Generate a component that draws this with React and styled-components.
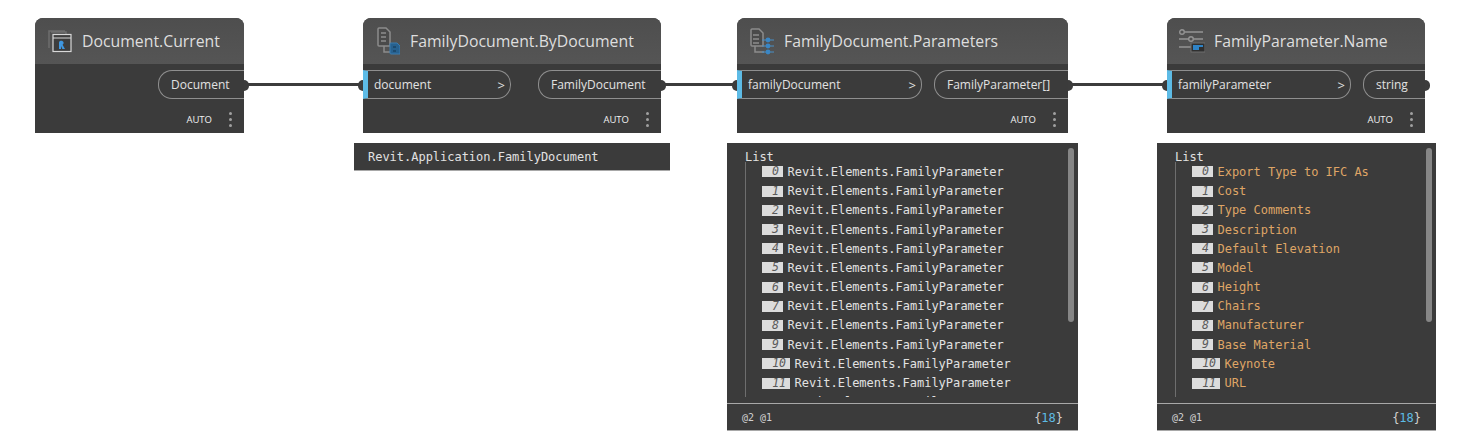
import styled, { createGlobalStyle } from "styled-components";

const GlobalStyle = createGlobalStyle`
  html, body {
    margin: 0;
    background: #fff;
  }
  #root {
    width: 1460px;
    height: 442px;
    overflow: hidden;
  }
`;

const Canvas = styled.div`
  position: relative;
  width: 1460px;
  height: 442px;
  background: #fff;
  font-family: "Open Sans", "Noto Sans", sans-serif;
`;

const Wire = styled.div`
  position: absolute;
  left: ${(p) => p.$x}px;
  top: 83px;
  width: ${(p) => p.$w}px;
  height: 3px;
  background: #3c3c3c;
`;

// nodes sit on a free canvas, so they keep their own coordinates
const Node = styled.div`
  position: absolute;
  left: ${(p) => p.$x}px;
  top: 18px;
  width: ${(p) => p.$w}px;
  height: 115px;
  background: #3b3b3b;
  border-radius: 8px 8px 0 0;
  display: flex;
  flex-direction: column;
`;

const NodeHeader = styled.div`
  height: 46px;
  flex: none;
  display: flex;
  align-items: center;
  gap: 10px;
  padding-left: 12px;
  background: linear-gradient(#4e4e4e, #555555);
  border-radius: 8px 8px 0 0;
  box-sizing: border-box;
`;

const IconSlot = styled.div`
  width: 25px;
  height: 30px;
  flex: none;
  display: flex;
  align-items: center;
  justify-content: center;
`;

const Title = styled.div`
  font-size: 15.8px;
  color: #dedede;
  white-space: nowrap;
`;

const PortRow = styled.div`
  display: flex;
  justify-content: space-between;
  margin-top: 6px;
  height: 29px;
`;

const InPort = styled.div`
  position: relative;
  width: ${(p) => p.$w}px;
  height: 29px;
  box-sizing: border-box;
  display: flex;
  align-items: center;
  justify-content: space-between;
  padding: 0 5px 0 6px;
  border: 1px solid #8f8f8f;
  border-left: 5px solid #5dbbe6;
  border-radius: 0 14px 14px 0;
  color: #e2e2e2;
  font-size: 12px;

  span {
    font-size: 13px;
  }

  &::before {
    content: "";
    position: absolute;
    left: -10px;
    top: 9px;
    width: 5px;
    height: 11px;
    background: #3c3c3c;
    border-radius: 5px 0 0 5px;
  }
`;

const OutPort = styled.div`
  position: relative;
  width: ${(p) => p.$w}px;
  height: 29px;
  box-sizing: border-box;
  display: flex;
  align-items: center;
  padding-left: 12px;
  border: 1px solid #8f8f8f;
  border-right: none;
  border-radius: 14px 0 0 14px;
  color: #e2e2e2;
  font-size: 12px;

  &::after {
    content: "";
    position: absolute;
    right: -5px;
    top: 9px;
    width: 5px;
    height: 11px;
    background: #3c3c3c;
    border-radius: 0 5px 5px 0;
  }
`;

const NodeFooter = styled.div`
  flex: 1;
  display: flex;
  align-items: center;
  justify-content: flex-end;
  padding: 6px 12px 0 0;
  gap: 17px;
`;

const Auto = styled.span`
  font-size: 9.5px;
  color: #f0f0f0;
`;

const Dots = styled.div`
  display: flex;
  flex-direction: column;
  gap: 3px;

  span {
    width: 3px;
    height: 3px;
    background: #a0a0a0;
    border-radius: 50%;
  }
`;

const Tooltip = styled.div`
  position: absolute;
  left: 354px;
  top: 143px;
  width: 316px;
  height: 28px;
  box-sizing: border-box;
  padding: 1px 0 0 14px;
  display: flex;
  align-items: center;
  background: #3b3b3b;
  border-bottom: 1px solid #a8a8a8;
  font-family: "DejaVu Sans Mono", monospace;
  font-size: 12px;
  letter-spacing: -0.02px;
  color: #e2e2e2;
`;

const Panel = styled.div`
  position: absolute;
  left: ${(p) => p.$x}px;
  top: 143px;
  width: ${(p) => p.$w}px;
  height: 288px;
  box-sizing: border-box;
  background: #3b3b3b;
  border-bottom: 1px solid #a8a8a8;
  display: flex;
  flex-direction: column;
  font-family: "DejaVu Sans Mono", monospace;
  font-size: 12px;
  letter-spacing: -0.02px;
  color: #e2e2e2;
`;

const Scrollbar = styled.div`
  position: absolute;
  right: 4px;
  top: 5px;
  width: 6px;
  height: 174px;
  background: #868686;
  border-radius: 3px;
`;

const PanelBody = styled.div`
  height: 254px;
  flex: none;
  box-sizing: border-box;
  padding: 7px 0 0 18px;
  overflow: hidden;
`;

const ListTitle = styled.div`
  height: 12.4px;
  line-height: 14px;
`;

const ListRows = styled.div`
  border-left: 1px solid #6e6e6e;
  padding-left: 16px;
`;

const Row = styled.div`
  height: 19.2px;
  display: flex;
  align-items: center;
  gap: 4.5px;
  white-space: nowrap;
  color: ${(p) => (p.$orange ? "#dfa566" : "#e2e2e2")};
`;

const Badge = styled.span`
  width: ${(p) => (p.$wide ? 28 : 21)}px;
  height: 11px;
  flex: none;
  box-sizing: border-box;
  padding-right: 4px;
  background: #dcdcdc;
  color: #5a5a5a;
  font-size: 11.5px;
  font-style: italic;
  line-height: 11px;
  text-align: right;
`;

const PanelFooter = styled.div`
  margin-top: 6px;
  flex: 1;
  display: flex;
  align-items: center;
  justify-content: space-between;
  padding: 1px 15px 0;
  border-top: 1px solid #a8a8a8;
`;

const Levels = styled.span`
  font-size: 10px;
  color: #d0d0d0;
`;

const Count = styled.span`
  color: #d0d0d0;

  b {
    font-weight: normal;
    color: #5dbbe6;
  }
`;

const CurrentIcon = () => (
  <svg width="24" height="24" viewBox="0 0 24 24" fill="none">
    <path d="M1 19V2h16M3 3h15v2" stroke="#6e6e6e" strokeWidth="1.5" />
    <rect x="5" y="5.5" width="18" height="17" fill="#3d3d3d" stroke="#d8d8d8" strokeWidth="1.2" />
    <path d="M5 9h18" stroke="#d8d8d8" strokeWidth="1" />
    <path d="M11 20v-6.5c0-2 4-2.5 4.6 0 .2 1-.4 1.8-1 2.2l2.4 4.3h-2.6l-1.4-3V20z" fill="#3f97e0" />
  </svg>
);

const ByDocumentIcon = () => (
  <svg width="24" height="28" viewBox="0 0 24 28" fill="none">
    <path d="M3 1h7l4 4v14H3a1 1 0 0 1-1-1V2a1 1 0 0 1 1-1z" fill="#4a4a4a" stroke="#8c8c8c" strokeWidth="1.5" />
    <path d="M5 5h5v2H5zM5 9h5v2H5zM5 13h5v2H5z" fill="#7c7c7c" />
    <path d="M8 19v6h8" stroke="#8c8c8c" strokeWidth="1.5" />
    <path d="M15 16h6l3 3v8h-9a1 1 0 0 1-1-1v-9a1 1 0 0 1 1-1z" fill="#27618f" stroke="#3a7cb0" strokeWidth="1" />
    <path d="M17 19h3v2h-3zM17 23h3v2h-3z" fill="#1d4a6e" />
  </svg>
);

const ParametersIcon = () => (
  <svg width="24" height="27" viewBox="0 0 24 27" fill="none">
    <path d="M2 1h7l4 4v13H2a1 1 0 0 1-1-1V2a1 1 0 0 1 1-1z" fill="#4a4a4a" stroke="#8c8c8c" strokeWidth="1.5" />
    <path d="M3 6h6v2H3zM3 10h6v2H3zM3 14h6v2H3z" fill="#7c7c7c" />
    <path d="M5 18v6h9" stroke="#8c8c8c" strokeWidth="1.5" />
    <path d="M12 12h12M12 18h12M12 24h12" stroke="#4a8fc4" strokeWidth="1" />
    <circle cx="18" cy="12" r="2.4" fill="#3a86c4" />
    <circle cx="18" cy="18" r="2.4" fill="#3a86c4" />
    <circle cx="18" cy="24" r="2.4" fill="#3a86c4" />
  </svg>
);

const NameIcon = () => (
  <svg width="27" height="24" viewBox="0 0 27 24" fill="none" style={{ flex: "none" }}>
    <path d="M7 3h18M1 10h10M16 10h9M1 18h12" stroke="#949494" strokeWidth="1.5" />
    <circle cx="4" cy="3" r="2.3" stroke="#949494" strokeWidth="1.4" />
    <circle cx="13" cy="10" r="2.3" stroke="#949494" strokeWidth="1.4" />
    <rect x="13" y="14" width="14" height="9" fill="#2f2f2f" stroke="#6e6e6e" />
    <rect x="15" y="16" width="6" height="5" fill="#2f83c6" />
    <rect x="21" y="16" width="4" height="2" fill="#2f83c6" />
  </svg>
);

const nodes = [
  { x: 35, w: 209, title: "Document.Current", Icon: CurrentIcon, out: "Document", outW: 86 },
  { x: 363, w: 298, title: "FamilyDocument.ByDocument", Icon: ByDocumentIcon, input: "document", inW: 148, out: "FamilyDocument", outW: 123 },
  { x: 737, w: 331, title: "FamilyDocument.Parameters", Icon: ParametersIcon, input: "familyDocument", inW: 185, out: "FamilyParameter[]", outW: 134 },
  { x: 1167, w: 258, title: "FamilyParameter.Name", Icon: NameIcon, input: "familyParameter", inW: 184, out: "string", outW: 62 },
];

const paramRows = Array(13).fill("Revit.Elements.FamilyParameter");
const nameRows = [
  "Export Type to IFC As",
  "Cost",
  "Type Comments",
  "Description",
  "Default Elevation",
  "Model",
  "Height",
  "Chairs",
  "Manufacturer",
  "Base Material",
  "Keynote",
  "URL",
  "",
];

function ListPanel({ x, w, rows, orange }) {
  return (
    <Panel $x={x} $w={w}>
      <Scrollbar />
      <PanelBody>
        <ListTitle>List</ListTitle>
        <ListRows>
          {rows.map((text, i) => (
            <Row key={i} $orange={orange}>
              <Badge $wide={i > 9}>{i}</Badge>
              {text}
            </Row>
          ))}
        </ListRows>
      </PanelBody>
      <PanelFooter>
        <Levels>@2 @1</Levels>
        <Count>
          {"{"}
          <b>18</b>
          {"}"}
        </Count>
      </PanelFooter>
    </Panel>
  );
}

export default function App() {
  return (
    <>
      <GlobalStyle />
      <Canvas>
        <Wire $x={248} $w={112} />
        <Wire $x={665} $w={69} />
        <Wire $x={1072} $w={92} />
        {nodes.map((n) => (
          <Node key={n.title} $x={n.x} $w={n.w}>
            <NodeHeader>
              <IconSlot>
                <n.Icon />
              </IconSlot>
              <Title>{n.title}</Title>
            </NodeHeader>
            <PortRow>
              {n.input ? (
                <InPort $w={n.inW}>
                  {n.input}
                  <span>&gt;</span>
                </InPort>
              ) : (
                <span />
              )}
              <OutPort $w={n.outW}>{n.out}</OutPort>
            </PortRow>
            <NodeFooter>
              <Auto>AUTO</Auto>
              <Dots>
                <span />
                <span />
                <span />
              </Dots>
            </NodeFooter>
          </Node>
        ))}
        <Tooltip>Revit.Application.FamilyDocument</Tooltip>
        <ListPanel x={727} w={351} rows={paramRows} />
        <ListPanel x={1157} w={279} rows={nameRows} orange />
      </Canvas>
    </>
  );
}
